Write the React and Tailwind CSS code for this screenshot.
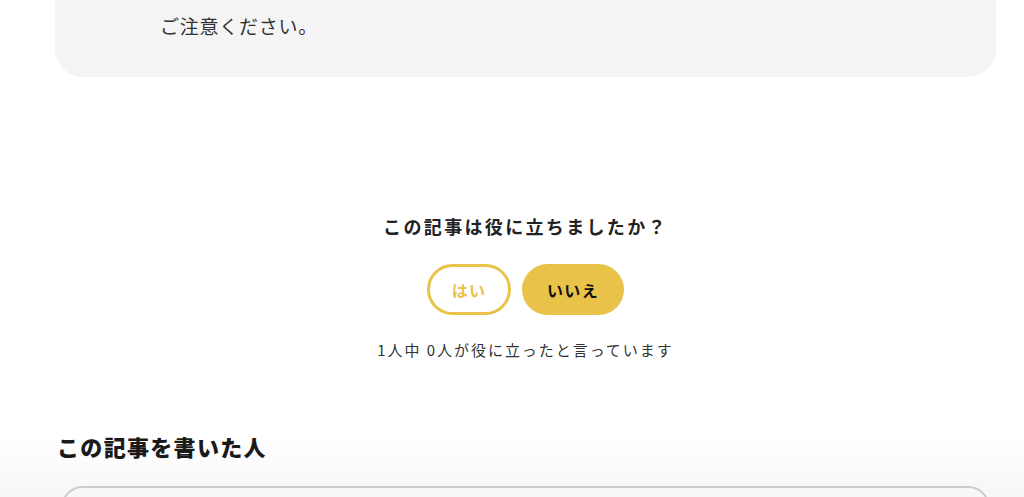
export default function App() {
  const font = { fontFamily: '"Noto Sans CJK JP", "Noto Sans", sans-serif' }
  return (
    <div className="h-[497px] overflow-hidden bg-white text-[#222]" style={font}>
      <div className="pl-[55px] pr-[28px]">
        {/* Notice box */}
        <div className="h-[77px] rounded-b-[28px] bg-[#f4f4f4] pl-[105px] pt-[10px]">
          <p className="text-[19px] leading-[32px] tracking-[0.04em] text-[#333]">ご注意ください。</p>
        </div>

        {/* Feedback */}
        <div className="mt-[136px] flex flex-col items-center">
          <h2 className="text-[18px] font-bold leading-[27px] tracking-[0.13em] text-[#222]">
            この記事は役に立ちましたか？
          </h2>
          <div className="mt-[24px] flex gap-[11px]">
            <button className="flex h-[51px] w-[84px] items-center justify-center rounded-full border-[3px] border-[#e9c349] bg-white text-[16px] font-bold tracking-[0.08em] text-[#e9c349]">
              はい
            </button>
            <button className="flex h-[51px] w-[102px] items-center justify-center rounded-full bg-[#e9c349] text-[16px] font-bold tracking-[0.08em] text-[#111]">
              いいえ
            </button>
          </div>
          <p className="mt-[23px] text-[15px] leading-[24px] tracking-[0.13em] text-[#333]">
            1人中 0人が役に立ったと言っています
          </p>
        </div>
      </div>

      {/* Author section */}
      <div className="mt-[68px] h-[200px] bg-gradient-to-b from-white from-[5%] to-[#eeeeee] to-[60%] pl-[55px] pr-[28px]">
        <h2 className="pl-[2px] text-[22px] font-black leading-[32px] tracking-[0.06em] text-[#1a1a1a]">
          この記事を書いた人
        </h2>
        <div className="mx-[6px] mt-[24px] h-[120px] rounded-[22px] border-2 border-[#cccccc] bg-[#f7f7f7]" />
      </div>
    </div>
  )
}
